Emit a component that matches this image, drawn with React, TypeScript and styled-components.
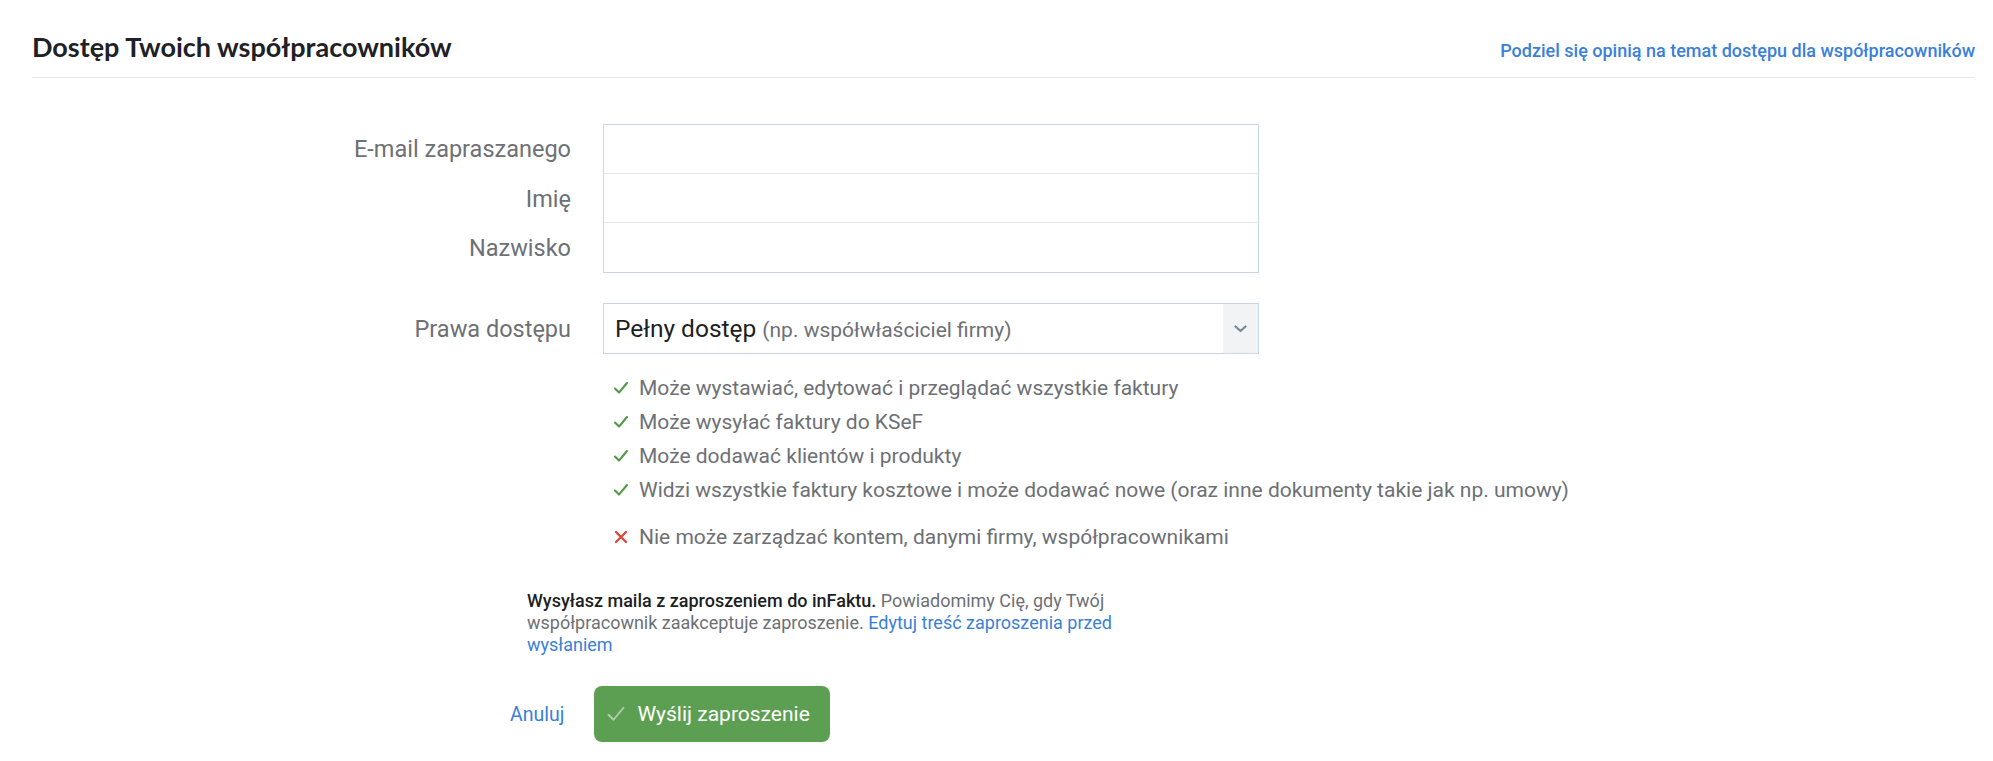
import React from 'react';
import styled, { createGlobalStyle } from 'styled-components';

const GlobalStyle = createGlobalStyle`
  html, body {
    margin: 0;
    padding: 0;
    background: #fff;
  }
  body {
    font-family: Roboto, "Liberation Sans", Arial, sans-serif;
    color: #6d7075;
  }
  * {
    box-sizing: border-box;
  }
`;

const Page = styled.div`
  padding: 0 18px 40px 32px;
  width: 1993px;
`;

const Header = styled.header`
  display: flex;
  justify-content: space-between;
  align-items: baseline;
  padding: 30px 0 14px;
  border-bottom: 1px solid #e4e6e9;
`;

const Title = styled.h1`
  margin: 0;
  font-family: Lato, "Noto Sans", sans-serif;
  font-weight: 700;
  font-size: 27px;
  line-height: 33px;
  color: #1e2125;
`;

const Link = styled.a<{ size?: number; weight?: number }>`
  color: #3a80d8;
  text-decoration: none;
  font-size: ${({ size }) => (size ? `${size}px` : 'inherit')};
  font-weight: ${({ weight }) => weight ?? 400};
  cursor: pointer;
`;

const Form = styled.form`
  display: grid;
  grid-template-columns: 539px 656px;
  column-gap: 32px;
  margin-top: 46px;
`;

const Label = styled.label<{ spaced?: boolean }>`
  display: flex;
  align-items: center;
  justify-content: flex-end;
  font-size: 23.5px;
  color: #6d7075;
  margin-top: ${({ spaced }) => (spaced ? 30 : 0)}px;
`;

const TextInput = styled.input<{ first?: boolean; last?: boolean }>`
  height: ${({ first, last }) => (first || last ? 50 : 49)}px;
  width: 100%;
  margin: 0;
  padding: 0 12px;
  font-family: Roboto, sans-serif;
  font-size: 21px;
  border: 1px solid #c9d6e3;
  border-top: ${({ first }) => (first ? '1px solid #c9d6e3' : 'none')};
  border-bottom: ${({ last }) => (last ? '1px solid #c9d6e3' : '1px solid #e1e7ee')};
  outline: none;
`;

const Select = styled.div`
  margin-top: 30px;
  height: 51px;
  display: flex;
  align-items: stretch;
  border: 1px solid #c9d6e3;
`;

const SelectValue = styled.div`
  flex: 1;
  display: flex;
  align-items: center;
  gap: 6px;
  padding-left: 11px;
  font-size: 24.5px;
  color: #1d1f22;
  white-space: nowrap;

  small {
    font-size: 21px;
    color: #6d7075;
    position: relative;
    top: 1px;
  }
`;

const SelectArrow = styled.div`
  width: 35px;
  display: flex;
  align-items: center;
  justify-content: center;
  background: #f1f3f5;
`;

const Rights = styled.ul`
  grid-column: 2;
  list-style: none;
  margin: 17px 0 0;
  padding: 0 0 0 10px;
`;

const Right = styled.li<{ denied?: boolean }>`
  display: flex;
  align-items: center;
  gap: 10px;
  height: 34px;
  font-size: 21px;
  color: #6d7075;
  white-space: nowrap;
  margin-top: ${({ denied }) => (denied ? 13 : 0)}px;

  svg {
    flex: none;
  }
`;

const Info = styled.p`
  margin: 36px 0 0 495px;
  width: 600px;
  font-size: 18px;
  line-height: 22px;
  color: #6d7075;

  b {
    color: #1d1f22;
    font-weight: 500;
  }
`;

const Actions = styled.div`
  display: flex;
  align-items: center;
  gap: 30px;
  margin: 30px 0 0 478px;
`;

const SubmitButton = styled.button`
  display: flex;
  align-items: center;
  gap: 11px;
  height: 56px;
  width: 236px;
  padding: 0 0 0 12px;
  border: none;
  border-radius: 8px;
  background: #5d9f52;
  color: #fff;
  font-family: Roboto, sans-serif;
  font-size: 21px;
  cursor: pointer;
`;

const Check = ({ color = '#4f9a43', size = 16, width = 2.1 }: { color?: string; size?: number; width?: number }) => (
  <svg width={size} height={size} viewBox="0 0 16 16">
    <path d="M2 8.6 L6 12.6 L14 3" fill="none" stroke={color} strokeWidth={width} strokeLinecap="round" strokeLinejoin="round" />
  </svg>
);

const Cross = () => (
  <svg width={16} height={16} viewBox="0 0 16 16">
    <path d="M3 3 L13 13 M13 3 L3 13" fill="none" stroke="#d84a3c" strokeWidth="2.4" strokeLinecap="round" />
  </svg>
);

const Chevron = () => (
  <svg width={13} height={8} viewBox="0 0 13 8">
    <path d="M1.5 1.5 L6.5 6 L11.5 1.5" fill="none" stroke="#7b8794" strokeWidth="2.2" strokeLinecap="round" strokeLinejoin="round" />
  </svg>
);

const allowed = [
  'Może wystawiać, edytować i przeglądać wszystkie faktury',
  'Może wysyłać faktury do KSeF',
  'Może dodawać klientów i produkty',
  'Widzi wszystkie faktury kosztowe i może dodawać nowe (oraz inne dokumenty takie jak np. umowy)',
];

export default function App() {
  return (
    <>
      <GlobalStyle />
      <Page>
        <Header>
          <Title>Dostęp Twoich współpracowników</Title>
          <Link size={18} weight={500}>Podziel się opinią na temat dostępu dla współpracowników</Link>
        </Header>

        <Form onSubmit={(e) => e.preventDefault()}>
          <Label>E-mail zapraszanego</Label>
          <TextInput first />
          <Label>Imię</Label>
          <TextInput />
          <Label>Nazwisko</Label>
          <TextInput last />

          <Label spaced>Prawa dostępu</Label>
          <Select>
            <SelectValue>
              Pełny dostęp <small>(np. współwłaściciel firmy)</small>
            </SelectValue>
            <SelectArrow>
              <Chevron />
            </SelectArrow>
          </Select>

          <Rights>
            {allowed.map((text) => (
              <Right key={text}>
                <Check />
                {text}
              </Right>
            ))}
            <Right denied>
              <Cross />
              Nie może zarządzać kontem, danymi firmy, współpracownikami
            </Right>
          </Rights>
        </Form>

        <Info>
          <b>Wysyłasz maila z zaproszeniem do inFaktu.</b> Powiadomimy Cię, gdy Twój współpracownik zaakceptuje
          zaproszenie. <Link>Edytuj treść zaproszenia przed wysłaniem</Link>
        </Info>

        <Actions>
          <Link size={19.5}>Anuluj</Link>
          <SubmitButton type="button">
            <Check color="rgba(255,255,255,0.5)" size={20} width={1.5} />
            Wyślij zaproszenie
          </SubmitButton>
        </Actions>
      </Page>
    </>
  );
}
